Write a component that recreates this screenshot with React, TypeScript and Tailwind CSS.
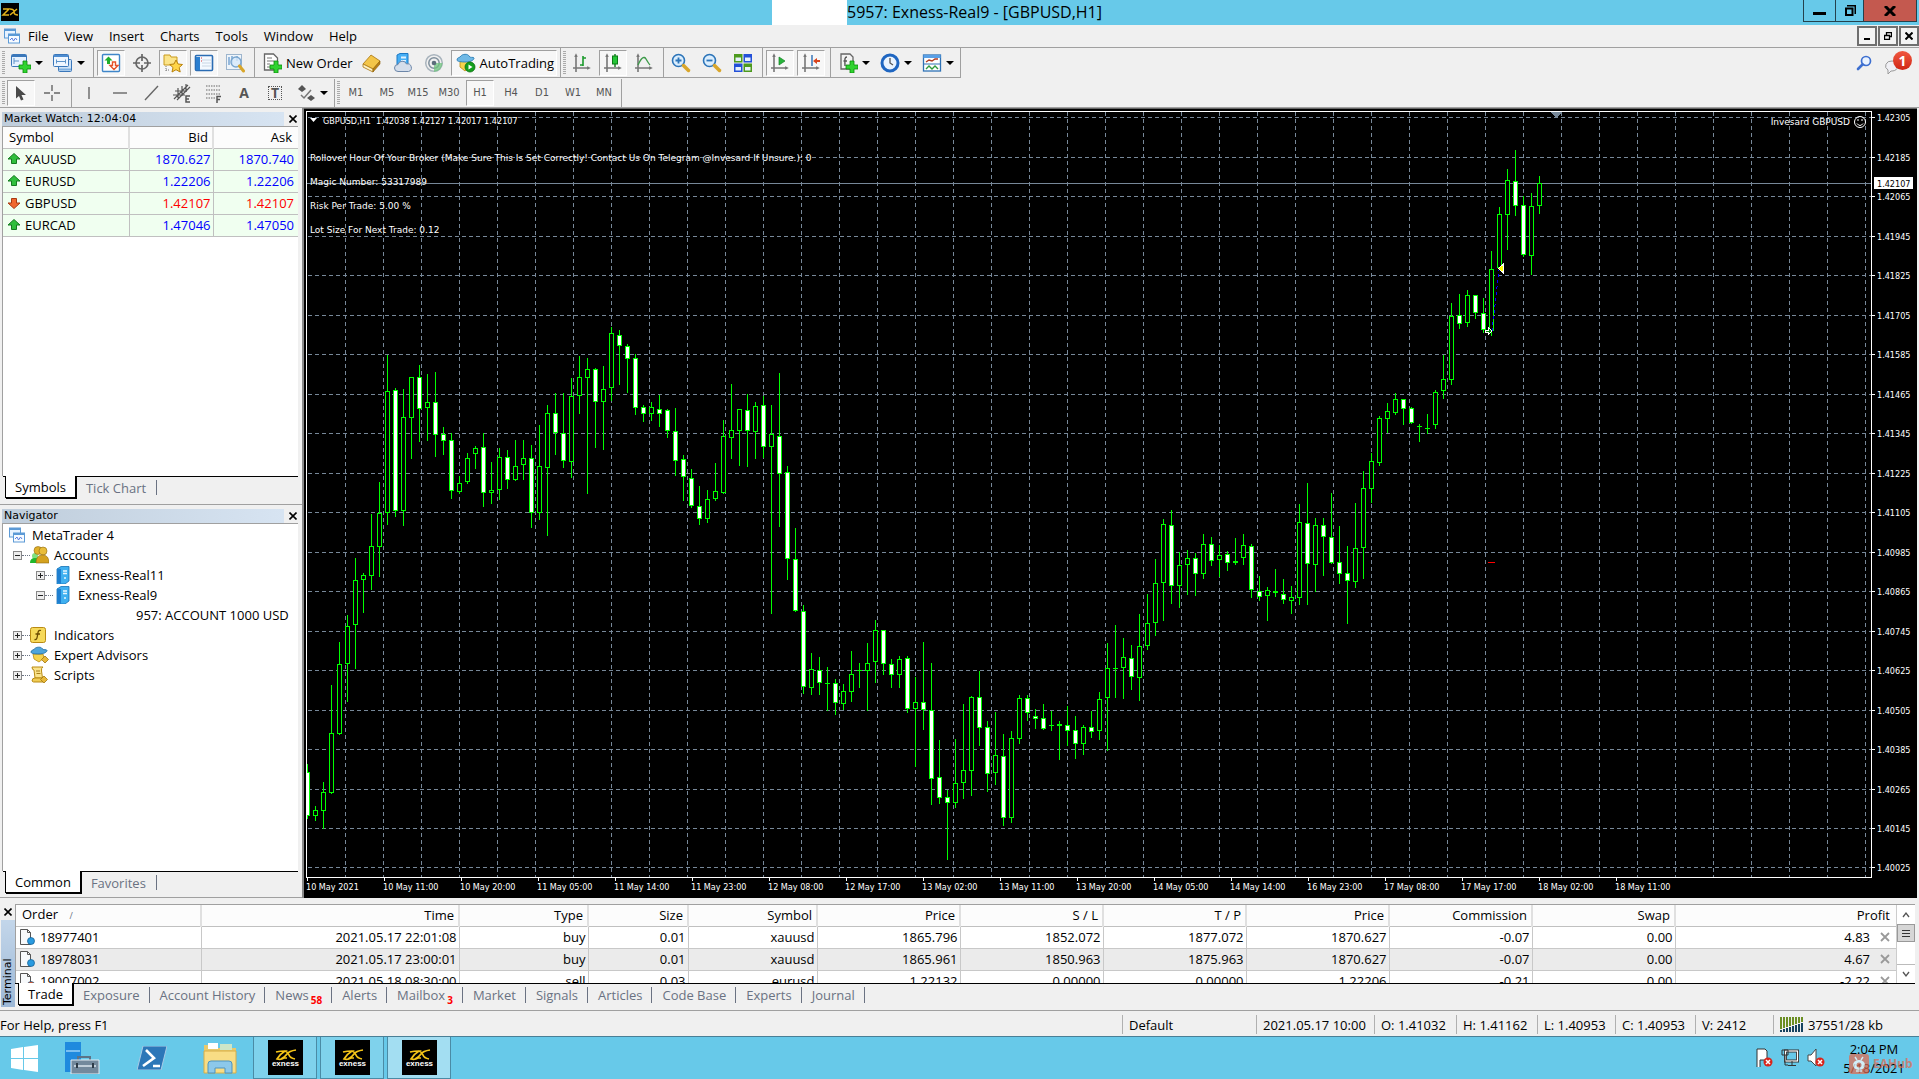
import React from "react";

const UI = "font-['Open_Sans','Noto_Sans',sans-serif]";

/* ---------- chart data ---------- */

// One candle: [high, body top, body bottom, low, bearish?], in pixels on the price scale.
type Candle = [number, number, number, number, number];

const CANDLES: Candle[] = [
  [764, 772, 816, 818, 1], [806, 810, 816, 820, 0], [782, 792, 811, 828, 0], [685, 733, 793, 793, 0],
  [642, 664, 734, 734, 0], [615, 626, 664, 701, 0], [558, 580, 625, 668, 0], [573, 575, 580, 612, 0],
  [514, 546, 576, 589, 0], [482, 513, 547, 576, 0], [355, 391, 513, 524, 0], [388, 390, 511, 516, 1],
  [389, 417, 511, 525, 0], [377, 377, 418, 458, 0], [365, 377, 409, 441, 1], [374, 402, 408, 440, 0],
  [372, 402, 435, 456, 1], [427, 434, 441, 454, 1], [433, 440, 491, 498, 1], [476, 483, 492, 493, 0],
  [453, 458, 482, 483, 0], [446, 448, 454, 468, 0], [433, 447, 493, 506, 1], [462, 490, 493, 503, 0],
  [448, 457, 490, 499, 0], [450, 457, 480, 488, 1], [440, 466, 480, 480, 0], [440, 458, 465, 479, 0],
  [445, 458, 513, 527, 1], [425, 466, 513, 519, 0], [405, 413, 468, 535, 0], [393, 413, 433, 454, 1],
  [393, 433, 461, 467, 1], [378, 396, 462, 477, 0], [356, 377, 396, 413, 0], [358, 369, 378, 493, 0],
  [368, 369, 402, 447, 1], [366, 389, 402, 449, 0], [327, 333, 388, 400, 0], [330, 335, 346, 384, 1],
  [344, 346, 359, 392, 1], [354, 358, 408, 414, 1], [405, 407, 414, 421, 1], [402, 407, 414, 420, 0],
  [395, 409, 414, 426, 1], [409, 410, 431, 437, 1], [408, 431, 461, 475, 1], [455, 459, 477, 500, 1],
  [469, 478, 506, 507, 1], [486, 506, 519, 524, 1], [490, 499, 519, 522, 0], [463, 491, 499, 500, 0],
  [420, 436, 493, 493, 0], [384, 430, 438, 458, 0], [409, 409, 431, 465, 0], [394, 410, 431, 466, 1],
  [402, 406, 432, 458, 0], [396, 405, 447, 457, 1], [405, 434, 447, 613, 0], [373, 436, 474, 526, 1],
  [466, 472, 559, 579, 1], [528, 559, 611, 611, 1], [605, 611, 687, 693, 1], [653, 669, 688, 694, 0],
  [657, 670, 683, 694, 1], [667, 683, 684, 710, 1], [679, 683, 703, 714, 1], [684, 691, 704, 709, 0],
  [651, 674, 692, 701, 0], [663, 670, 671, 687, 0], [643, 663, 671, 710, 0], [620, 630, 662, 682, 0],
  [630, 630, 664, 674, 1], [659, 664, 675, 687, 1], [656, 659, 675, 687, 0], [656, 658, 709, 712, 1],
  [677, 702, 709, 766, 0], [642, 702, 710, 729, 1], [663, 710, 779, 804, 1], [740, 777, 798, 803, 1],
  [790, 797, 803, 859, 1], [739, 783, 803, 807, 0], [704, 770, 783, 798, 0], [696, 697, 771, 795, 0],
  [671, 697, 728, 745, 1], [721, 727, 774, 791, 1], [712, 755, 773, 784, 0], [734, 756, 818, 825, 1],
  [731, 738, 818, 822, 0], [695, 698, 739, 743, 0], [695, 698, 713, 720, 1], [709, 716, 719, 728, 1],
  [704, 718, 729, 729, 1], [711, 725, 725, 730, 0], [721, 724, 726, 759, 1], [706, 725, 731, 745, 1],
  [716, 730, 744, 758, 1], [725, 727, 744, 754, 0], [711, 727, 732, 737, 1], [692, 699, 731, 739, 0],
  [643, 668, 698, 750, 0], [625, 668, 668, 697, 0], [638, 657, 668, 698, 0], [645, 658, 677, 689, 1],
  [614, 646, 678, 700, 0], [594, 623, 646, 649, 0], [559, 583, 623, 635, 0], [519, 524, 583, 620, 0],
  [510, 525, 586, 603, 1], [552, 565, 586, 607, 0], [550, 558, 565, 594, 0], [553, 558, 574, 595, 1],
  [534, 544, 574, 578, 0], [537, 544, 561, 565, 1], [545, 555, 560, 576, 0], [551, 554, 563, 570, 1],
  [538, 561, 563, 564, 0], [534, 545, 558, 564, 0], [544, 546, 590, 597, 1], [576, 591, 597, 600, 1],
  [587, 590, 596, 620, 0], [569, 591, 593, 596, 1], [579, 594, 600, 603, 1], [586, 597, 601, 613, 0],
  [504, 522, 598, 604, 0], [483, 523, 564, 604, 1], [518, 525, 565, 591, 0], [518, 525, 537, 575, 1],
  [493, 537, 563, 563, 1], [526, 562, 574, 583, 1], [546, 573, 581, 623, 1], [503, 548, 582, 587, 0],
  [471, 488, 548, 578, 0], [453, 461, 489, 502, 0], [416, 418, 463, 465, 0], [403, 411, 419, 432, 0],
  [393, 399, 413, 414, 0], [399, 399, 409, 424, 1], [407, 408, 423, 423, 1], [424, 426, 426, 441, 0],
  [414, 428, 429, 433, 0], [390, 392, 425, 428, 0], [355, 379, 391, 398, 0], [303, 316, 380, 384, 0],
  [294, 315, 324, 328, 1], [290, 295, 323, 326, 0], [295, 295, 313, 318, 1], [298, 313, 330, 332, 1],
  [251, 269, 331, 335, 0], [207, 214, 268, 268, 0], [169, 180, 215, 249, 0], [150, 181, 206, 215, 1],
  [196, 205, 255, 256, 1], [193, 206, 256, 274, 0], [176, 183, 206, 213, 0],
];

const TIMES = [
  "10 May 2021", "10 May 11:00", "10 May 20:00", "11 May 05:00", "11 May 14:00", "11 May 23:00",
  "12 May 08:00", "12 May 17:00", "13 May 02:00", "13 May 11:00", "13 May 20:00", "14 May 05:00",
  "14 May 14:00", "16 May 23:00", "17 May 08:00", "17 May 17:00", "18 May 02:00", "18 May 11:00",
];
const PRICES = Array.from({ length: 20 }, (_, i) => ((142305 - i * 120) / 100000).toFixed(5));
const COMMENTS = [
  "Rollover Hour Of Your Broker (Make Sure This Is Set Correctly! Contact Us On Telegram @Invesard If Unsure.): 0",
  "Magic Number: 53317989",
  "Risk Per Trade: 5.00 %",
  "Lot Size For Next Trade: 0.12",
];
const priceY = (i: number) => 117 + Math.ceil((i * 750) / 19);

function Chart() {
  const tiny = "fill-white text-[9px] font-['DejaVu_Sans_Condensed','DejaVu_Sans',sans-serif]";
  const note = "fill-white text-[9px] font-['DejaVu_Sans',sans-serif]";
  return (
    <svg className="absolute inset-0 h-full w-full" role="img" aria-label="GBPUSD H1 candlestick chart">
      <g transform="translate(0 -109)" shapeRendering="crispEdges">
        {PRICES.map((p, i) => (
          <line key={p} x1={4} x2={1567} y1={priceY(i) + 0.5} y2={priceY(i) + 0.5} stroke="#778899" strokeDasharray="4 3" />
        ))}
        {Array.from({ length: 41 }, (_, i) => (
          <line key={i} x1={41.5 + i * 38} x2={41.5 + i * 38} y1={112} y2={877} stroke="#778899" strokeDasharray="4 3" />
        ))}
        <rect x={3} y={183} width={1565} height={1} fill="#778899" />
        <path d="M1247 112h11l-5.500 6z" fill="#778899" />
        {CANDLES.map(([h, t, b, l, bear], i) => {
          const x = 3 + i * 8;
          return (
            <g key={i} fill="#00ff00">
              <rect x={x} y={h} width={1} height={l - h + 1} />
              <rect x={x - 2} y={t} width={5} height={Math.max(1, b - t)} />
              {b - t > 2 && <rect x={x - 1} y={t + 1} width={3} height={b - t - 2} fill={bear ? "#fff" : "#000"} />}
            </g>
          );
        })}
        <line x1={1188} y1={331} x2={1195} y2={270} stroke="#0000ff" strokeDasharray="3 3" />
        <path d="M1199.500 264v9l-5-4.500z" fill="#ffff00" stroke="#fff" />
        <path d="M1181 330h3v-3l4 4-4 4v-3h-3z" fill="#008000" stroke="#fff" />
        <rect x={1184} y={562} width={7} height={1} fill="#ff0000" />
        <rect x={0} y={109} width={2} height={789} fill="#000" />
        <path d="M2.500 111.500H1567.500V877.500H2.500Z" fill="none" stroke="#fff" />
        {PRICES.map((p, i) => (
          <rect key={p} x={1568} y={priceY(i)} width={3} height={1} fill="#fff" />
        ))}
        {TIMES.map((t, i) => (
          <rect key={t} x={3 + i * 77} y={878} width={1} height={3} fill="#fff" />
        ))}
      </g>
      <g transform="translate(0 -109)">
        {PRICES.map((p, i) => (
          <text key={p} x={1573} y={priceY(i) + 4} className={tiny}>{p}</text>
        ))}
        <rect x={1570} y={177} width={39} height={12} fill="#fff" />
        <text x={1573} y={187} className="fill-black text-[9px] font-['DejaVu_Sans_Condensed','DejaVu_Sans',sans-serif]">1.42107</text>
        {TIMES.map((t, i) => (
          <text key={t} x={2 + i * 77} y={890} className={tiny}>{t}</text>
        ))}
        <path d="M6 118h7l-3.500 4z" fill="#fff" />
        <text x={19} y={124} className={tiny}>GBPUSD,H1&nbsp; 1.42038 1.42127 1.42017 1.42107</text>
        {COMMENTS.map((c, i) => (
          <text key={c} x={6} y={161 + i * 24} className={note}>{c}</text>
        ))}
        <text x={1546} y={125} textAnchor="end" className={note}>Invesard GBPUSD</text>
        <g fill="none" stroke="#fff">
          <circle cx={1556} cy={122} r={5.500} />
          <path d="M1553 123.500q3 4 6 0M1554 119v2M1558 119v2" />
        </g>
      </g>
    </svg>
  );
}

/* ---------- icons ---------- */

const svg = (size: string, body: React.ReactNode, vb = "0 0 20 20") => (
  <svg viewBox={vb} className={`shrink-0 ${size}`} aria-hidden="true">{body}</svg>
);
const S = "h-5 w-5";
const plus = <path d="M12 8h4v4h4v4h-4v4h-4v-4H8v-4h4z" fill="#2fd32f" stroke="#0b8a0b" strokeWidth=".8" />;
const axes = <path d="M4 2v15M2 15h15M3 4l1-2 1 2M15 14l2 1-2 1M4 17v2M1 15h2" fill="none" stroke="#777" strokeWidth="1.600" />;

const I = {
  newChart: svg(S, <><rect x=".5" y="1.500" width="15" height="12" rx="1" fill="#e6f2ff" stroke="#3a77ba" /><path d="M1 3h14" stroke="#3a77ba" strokeWidth="2" /><path d="M3 5v6M3 8h5" stroke="#5d93c9" />{plus}</>),
  profiles: svg(S, <><rect x="5.500" y="6.500" width="13" height="12" rx="1" fill="#cfe3f7" stroke="#3a77ba" /><path d="M6 16.500h12" stroke="#7fb0e0" strokeWidth="2" /><rect x=".5" y="1.500" width="15" height="12" rx="1" fill="#eef6ff" stroke="#3a77ba" /><path d="M1 3h14" stroke="#4d8cd0" strokeWidth="2" /><path d="M3 8.500h10M3.500 6.500v4M12.500 6.500v4" stroke="#5d93c9" /></>),
  watch: svg(S, <><rect x="1.500" y="1.500" width="17" height="17" rx="1" fill="#fff" stroke="#3f86c9" strokeWidth="1.400" /><path d="M7.500 3.500l4 4H9v3.500H6V7.500H3.500z" fill="#1fae2d" /><path d="M13 16.500l-4-4h2.500V9h3v3.500H17z" fill="#fff" stroke="#e5532a" strokeWidth="1.400" /></>),
  cross: svg(S, <g fill="none" stroke="#666" strokeWidth="1.700"><circle cx="10" cy="10" r="6" /><path d="M10 1v7M10 12v7M1 10h7M12 10h7" /></g>),
  folder: svg(S, <><path d="M1 2h6l1 2h6v8H1z" fill="#fbe48a" stroke="#c99a1c" /><path d="M3 13v6M3 17h3" stroke="#777" strokeDasharray="1 1" /><path d="M13 7l2 4 4.500.5-3.300 3 1 4.500-4.200-2.300L9 19l1-4.500-3.300-3L11 11z" fill="#ffd548" stroke="#b9820d" /></>),
  terminal: svg(S, <><rect x="1.500" y="2.500" width="17" height="15" rx="1" fill="#f4f9ff" stroke="#2b6cb3" strokeWidth="1.600" /><path d="M2 4h4v13H2z" fill="#2b7fd0" /><path d="M8 7h9M8 10h9M8 13h9" stroke="#c9d6e4" /><path d="M7 5h1M7 8h1" stroke="#d33" /></>),
  tester: svg(S, <><rect x="1.500" y="1.500" width="15" height="15" fill="#eef4fa" stroke="#9db5cd" /><path d="M4 4v8M7 3v8M12 3v5" stroke="#3f7fbf" /><circle cx="11" cy="9" r="5" fill="#d6e9fb" fillOpacity=".8" stroke="#7aa6cf" strokeWidth="1.400" /><path d="M14.500 13l4 5" stroke="#d9a62a" strokeWidth="3" strokeLinecap="round" /></>),
  newOrder: svg(S, <><path d="M2.500 1h9l4 4v12h-13z" fill="#fff" stroke="#666" strokeWidth="1.300" /><path d="M5 5h5M5 8h7M5 11h3M5 14h3" stroke="#777" />{plus}</>),
  book: svg(S, <><path d="M1 11l8-9 9 6-7 8z" fill="#f3c548" stroke="#a8730d" strokeWidth=".8" /><path d="M1 11v3l10 5v-3z" fill="#fff3c4" stroke="#a8730d" strokeWidth=".8" /><path d="M11 16l7-8v3l-7 8z" fill="#b97f12" stroke="#8d5f08" strokeWidth=".6" /></>),
  vps: svg(S, <><path d="M4 2l3-1.500h8V12H4z" fill="#45aef5" stroke="#1d78c4" /><path d="M8 3.500h5v2H8zM8 7h5v1.500H8z" fill="#dff1ff" /><path d="M5 18.500a3.500 3.500 0 010-7 4.500 4.500 0 018.500-.5 3.800 3.800 0 012 7.500z" fill="#d5deeb" stroke="#6c86a8" /></>),
  signal: svg(S, <g fill="none"><circle cx="10" cy="10" r="8.300" stroke="#a9b4bd" strokeWidth="1.500" /><circle cx="10" cy="10" r="5.200" stroke="#7f8f9c" strokeWidth="1.500" /><path d="M10 10v9a9 9 0 008.500-9z" fill="#6fc47d" fillOpacity=".75" /><circle cx="10" cy="10" r="2.300" fill="#5c6d7b" /></g>),
  auto: svg(S, <><path d="M4 8h10l1 5-6 5-5-4z" fill="#f7d34c" stroke="#b98a12" strokeWidth=".8" /><path d="M1 7c0-3 3-2 4-4s7-2.500 8 0 4.500.5 5 2-3 4-8 4-9-.5-9-2z" fill="#6fb9e6" stroke="#2d7fb5" strokeWidth=".9" /><circle cx="14" cy="14" r="5" fill="#14a01c" stroke="#0a6d10" strokeWidth=".8" /><path d="M12.500 11.500v5l4-2.500z" fill="#fff" /></>),
  bars: svg(S, <>{axes}<path d="M11 3v10M11 5h3M8 12h3" stroke="#1b9a2c" strokeWidth="1.600" /></>),
  candles: svg(S, <>{axes}<path d="M12 1v13" stroke="#0c7a17" strokeWidth="1.400" /><rect x="9.500" y="3" width="5" height="8" fill="#25c637" stroke="#0c7a17" /></>),
  line: svg(S, <>{axes}<path d="M4 12q5-11 8-6t4 6" fill="none" stroke="#3d9a49" strokeWidth="1.400" /></>),
  zoomIn: svg(S, <><circle cx="7.500" cy="7.500" r="6" fill="#dbeefe" stroke="#2c74b8" strokeWidth="1.600" /><path d="M4.500 7.500h6M7.500 4.500v6" stroke="#2c74b8" strokeWidth="1.800" /><path d="M12.500 12.500l5 5" stroke="#d9a62a" strokeWidth="3.500" strokeLinecap="round" /></>),
  zoomOut: svg(S, <><circle cx="7.500" cy="7.500" r="6" fill="#dbeefe" stroke="#2c74b8" strokeWidth="1.600" /><path d="M4.500 7.500h6" stroke="#2c74b8" strokeWidth="1.800" /><path d="M12.500 12.500l5 5" stroke="#d9a62a" strokeWidth="3.500" strokeLinecap="round" /></>),
  tile: svg(S, <><path d="M1 1h8.500v8.500H1z" fill="#4d9a1d" /><path d="M10.500 1H19v8.500h-8.500z" fill="#2350d8" /><path d="M1 10.500h8.500V19H1z" fill="#2350d8" /><path d="M10.500 10.500H19V19h-8.500z" fill="#4d9a1d" /><path d="M2.500 4.500H8v3.500H2.500zM12 4.500h5.500v3.500H12zM2.500 14H8v3.500H2.500zM12 14h5.500v3.500H12z" fill="#e8f1fb" /></>),
  scroll: svg(S, <>{axes}<path d="M9 4v8l6-4z" fill="#27b53a" stroke="#138022" strokeWidth=".7" /></>),
  shift: svg(S, <>{axes}<path d="M11 2v11" stroke="#2b6cb3" strokeWidth="1.400" /><path d="M12 8l4-3v2h3v2h-3v2z" fill="#d8431c" /></>),
  indic: svg(S, <><path d="M3 1h9l3 3v12H3z" fill="#f3f3f3" stroke="#666" strokeWidth="1.300" /><path d="M9 4c-3 0-2 4-2 9M5.500 8H9" fill="none" stroke="#555" strokeWidth="1.400" />{plus}</>),
  clock: svg(S, <><circle cx="10" cy="10" r="8" fill="#eaf4ff" stroke="#1f66c1" strokeWidth="3" /><path d="M10 5v5l3 2" fill="none" stroke="#555" strokeWidth="1.300" /></>),
  template: svg(S, <><rect x="1.500" y="2" width="17" height="16" fill="#fff" stroke="#2f72b5" strokeWidth="1.300" /><path d="M1.500 3.500h17" stroke="#5aa0e6" strokeWidth="3" /><path d="M2 11h16" stroke="#2f72b5" /><path d="M4 9l3-2 3 1 3-2 3 0" fill="none" stroke="#b03b22" strokeWidth="1.400" /><path d="M4 16l3-3 3 3 3-3 3 3" fill="none" stroke="#2f9a3c" strokeWidth="1.400" /></>),
  cursor: svg(S, <path d="M5 3v12.500l3-2.500 2 4.500 2.500-1-2-4.500H15z" fill="#4a4a4a" />),
  plusCross: svg(S, <path d="M10 2v6M10 12v6M2 10h6M12 10h6" stroke="#666" strokeWidth="1.400" />),
  vline: svg(S, <path d="M10 4v12" stroke="#666" strokeWidth="1.400" />),
  hline: svg(S, <path d="M3 10h14" stroke="#666" strokeWidth="1.400" />),
  trend: svg(S, <path d="M4 17L17 3" stroke="#666" strokeWidth="1.400" />),
  channel: svg(S, <><path d="M2 16L16 2M5 17L18 4M3 8h12M1 12h12M6 5v10M10 3v10M14 1v8" fill="none" stroke="#555" strokeWidth="1.200" /><path d="M18 13h-4v6h4M14 16h3" fill="none" stroke="#555" strokeWidth="1.500" /></>),
  fibo: svg(S, <><path d="M3 3h15M3 7h15M3 11h15M3 15h9" stroke="#666" strokeWidth="1.200" strokeDasharray="1.500 1" /><path d="M18 13.500h-4V20M14 16.500h3" fill="none" stroke="#555" strokeWidth="1.500" /></>),
  arrows: svg(S, <><path d="M6 2l4 4-4 3-4-3zM15 12l4 3-4 3-4-3z" fill="#555" /><path d="M5 12l3 3 7-8" fill="none" stroke="#777" strokeWidth="1.500" /></>),
};

const up = svg("h-3.5 w-3.5", <path d="M7 1.500l6 5.500H9.500v4.500h-5V7H1z" fill="#2fbf3c" stroke="#157a20" />, "0 0 14 14");
const down = svg("h-3.5 w-3.5", <path d="M7 12.500L1 7h3.500V2.500h5V7H13z" fill="#f0692e" stroke="#a83a12" />, "0 0 14 14");
const mt = svg("h-4 w-4", <><rect x=".5" y="1" width="11" height="9" fill="#e8f3ff" stroke="#5c9ad6" /><path d="M.5 2h11" stroke="#5c9ad6" strokeWidth="2" /><rect x="4.500" y="6" width="11" height="9" fill="#f7fbff" stroke="#5c9ad6" /><path d="M4.500 7h11" stroke="#5c9ad6" strokeWidth="2" /><path d="M6 12l2-2 1.500 3 2-3 1.500 2" fill="none" stroke="#5b7fe0" /></>, "0 0 16 16");
const server = svg("h-[18px] w-[14px]", <><path d="M1 3l4-2.500h8V15l-4 3H1z" fill="#3fb0f0" stroke="#1572b5" strokeWidth=".8" /><path d="M1 2.500l4 .5v15l-4-1.500z" fill="#1f7fd0" /><path d="M7 5h4M7 7.500h4M8 12h2" stroke="#e8f6ff" strokeWidth="1.300" /></>, "0 0 14 18");

const accounts = svg("h-[18px] w-[19px]", <><circle cx="5" cy="10" r="3" fill="#7fe07f" /><path d="M0 17q0-5 5-5t5 5z" fill="#20b82c" /><circle cx="8" cy="4.500" r="4" fill="#e0b02a" stroke="#8d6a10" strokeWidth=".6" /><circle cx="13" cy="5" r="4" fill="#e9bd3a" stroke="#8d6a10" strokeWidth=".6" /><path d="M6 17q0-8 6.500-8T19 17z" fill="#d5a21f" stroke="#8d6a10" strokeWidth=".6" /></>, "0 0 19 18");
const fn = svg("h-4 w-4", <><rect x=".5" y=".5" width="15" height="15" rx="2" fill="#f6d95a" stroke="#b98a12" /><path d="M11 3.500c-3-1-3 2-3.500 5s-1 4.500-3 4M5.500 7h4.500" fill="none" stroke="#6b4b00" strokeWidth="1.300" /></>, "0 0 16 16");
const advisor = svg("h-[18px] w-[19px]", <><path d="M3 8h10l1 4-5 4-5-3z" fill="#f7d34c" stroke="#b98a12" strokeWidth=".8" /><path d="M1 6c0-2 3-2 4-3.500s6-2 7 0 5 .5 5 2-3 3.500-8 3.500S1 7.500 1 6z" fill="#4fa5db" stroke="#256fa3" strokeWidth=".9" /><path d="M15 10l3.500 3.500L15 17l-3.500-3.500z" fill="#e9b93a" stroke="#a1760c" strokeWidth=".8" /></>, "0 0 19 18");
const script = svg("h-[18px] w-[19px]", <><path d="M2 1h11q-2 1-1.500 4l1 7H5L4 4Q2 4 2 1z" fill="#fae38a" stroke="#b98a12" /><path d="M2 15q0-3 3-3h8v4H3.500z" fill="#f0cc55" stroke="#b98a12" /><path d="M6 5h4M6.500 7.500h4" stroke="#a57c1a" /><path d="M14 10l3.500 3.500L14 17l-3.500-3.500z" fill="#e9b93a" stroke="#a1760c" strokeWidth=".8" /></>, "0 0 19 18");
const doc = (dot: string) =>
  svg("h-4 w-4", <><path d="M1.500.5h7l3 3v12h-10z" fill="#f7f9fb" stroke="#555" /><path d="M8.500.5v3h3" fill="none" stroke="#555" /><circle cx="12" cy="12" r="3.500" fill={dot} stroke="#135c8f" strokeWidth=".7" /></>, "0 0 16 16");

/* ---------- toolbar parts ---------- */

const Handle = () => <div className="mx-0.5 h-6 w-[3px] shrink-0 bg-[repeating-linear-gradient(#aaa_0_1px,#efefef_1px_2px)]" />;
const Sep = () => <div className="mr-[3px] ml-0.5 h-full w-px shrink-0 bg-[#a0a0a0]" />;
const End = () => <div className="h-full w-px shrink-0 bg-[#a0a0a0]" />;

function Tool({ icon, name, on, menu, children }: { icon?: React.ReactNode; name: string; on?: boolean; menu?: boolean; children?: React.ReactNode }) {
  const size = children ? "gap-1 pl-1 pr-0.5" : menu ? "w-[39px] gap-1 pl-1" : "w-7 justify-center";
  const look = on ? "border-t border-l border-r border-b border-t-[#a0a0a0] border-l-[#a0a0a0] border-r-white border-b-white bg-[#f7f7f7]" : "";
  return (
    <button type="button" aria-label={name} className={`mr-[3px] flex h-[26px] shrink-0 items-center ${size} ${look}`}>
      {icon}
      {children && <span>{children}</span>}
      {menu && <span className="h-0 w-0 border-x-4 border-t-4 border-x-transparent border-t-black" />}
    </button>
  );
}

function PanelTitle({ title }: { title: string }) {
  return (
    <div className="flex h-[15px] items-center gap-1 pl-0.5">
      <h2 className="h-[14px] flex-1 bg-linear-to-r from-[#bfcddb] to-[#d7e4f2] pl-0.5 text-[11px] leading-[14px] font-['DejaVu_Sans',sans-serif]">{title}</h2>
      <button type="button" aria-label={`Close ${title}`} className="flex w-2.5 justify-center">
        {svg("h-2 w-2", <path d="M.5.5l7 7M7.500.5l-7 7" stroke="#000" strokeWidth="1.600" />, "0 0 8 8")}
      </button>
    </div>
  );
}

function PanelTabs({ first, second }: { first: string; second: string }) {
  return (
    <div className="flex h-[22px] border-t border-black text-[13px] leading-5 text-gray-500">
      <button type="button" className="-mt-px ml-0.5 border border-t-0 border-black bg-white px-[9px] text-black shadow-[1px_1px_0_#000]">{first}</button>
      <button type="button" className="px-2.5">{second}</button>
      <span className="my-[3px] w-px bg-gray-500" />
    </div>
  );
}

function Box({ open }: { open?: boolean }) {
  return svg("h-[9px] w-[9px]", <><rect x=".5" y=".5" width="8" height="8" fill="#ededed" stroke="#888" /><path d={open ? "M2 4.500h5" : "M2 4.500h5M4.500 2v5"} stroke="#222" /></>, "0 0 9 9");
}

function Node({ icon, label, open, deep }: { icon: React.ReactNode; label: string; open?: boolean; deep?: boolean }) {
  return (
    <li className={`flex h-5 items-center ${deep ? "pl-[33px]" : "pl-2.5"}`}>
      <Box open={open} />
      <span className="w-2 border-t border-dotted border-gray-500" />
      <span className={`flex shrink-0 ${deep ? "w-[25px] pl-[3px]" : "w-6"}`}>{icon}</span>
      {label}
    </li>
  );
}

/* ---------- data tables ---------- */

const WATCH = [
  ["XAUUSD", "1870.627", "1870.740", "up"],
  ["EURUSD", "1.22206", "1.22206", "up"],
  ["GBPUSD", "1.42107", "1.42107", "down"],
  ["EURCAD", "1.47046", "1.47050", "up"],
];
const ORDER_HEAD = ["Time", "Type", "Size", "Symbol", "Price", "S / L", "T / P", "Price", "Commission", "Swap"];
const ORDERS = [
  ["18977401", "2021.05.17 22:01:08", "buy", "0.01", "xauusd", "1865.796", "1852.072", "1877.072", "1870.627", "-0.07", "0.00", "4.83"],
  ["18978031", "2021.05.17 23:00:01", "buy", "0.01", "xauusd", "1865.961", "1850.963", "1875.963", "1870.627", "-0.07", "0.00", "4.67"],
  ["19007002", "2021.05.18 08:30:00", "sell", "0.03", "eurusd", "1.22132", "0.00000", "0.00000", "1.22206", "-0.21", "0.00", "-2.22"],
];
const TABS: [string, string?][] = [
  ["Exposure"], ["Account History"], ["News", "58"], ["Alerts"], ["Mailbox", "3"], ["Market"],
  ["Signals"], ["Articles"], ["Code Base"], ["Experts"], ["Journal"],
];

function MarketWatch() {
  return (
    <table className="w-full table-fixed border-collapse">
      <colgroup><col className="w-[126px]" /><col className="w-[84px]" /><col /></colgroup>
      <thead>
        <tr className="h-[21px] bg-[#fcfcfc]">
          <th className="border-r-2 border-b border-r-[#e0e0e0] border-b-[#c0c0c0] pl-1.5 text-left font-normal">Symbol</th>
          <th className="border-r-2 border-b border-r-[#e0e0e0] border-b-[#c0c0c0] pr-1 text-right font-normal">Bid</th>
          <th className="border-b border-[#c0c0c0] pr-1.5 text-right font-normal">Ask</th>
        </tr>
      </thead>
      <tbody>
        {WATCH.map(([s, b, a, d]) => (
          <tr key={s} className="h-[22px] bg-[#f0fff0]">
            <td className="border-r border-b border-[#c0c0c0] pl-1"><span className="flex items-center gap-1">{d === "up" ? up : down}{s}</span></td>
            <td className={`border-r border-b border-[#c0c0c0] pr-0.5 text-right ${d === "up" ? "text-[#0000ff]" : "text-[#ff0000]"}`}>{b}</td>
            <td className={`border-b border-[#c0c0c0] pr-1 text-right ${d === "up" ? "text-[#0000ff]" : "text-[#ff0000]"}`}>{a}</td>
          </tr>
        ))}
      </tbody>
    </table>
  );
}

function Orders() {
  const th = "border-r-2 border-b border-r-[#e0e0e0] border-b-[#c0c0c0] pr-1 text-right font-normal";
  const td = "border-r border-b border-[#c8c8c8] pr-0.5 text-right";
  return (
    <table className="w-full table-fixed border-collapse">
      <colgroup>
        <col className="w-[185px]" /><col className="w-[258px]" /><col className="w-[129px]" /><col className="w-[100px]" />
        <col className="w-[129px]" /><col className="w-[143px]" /><col className="w-[143px]" /><col className="w-[143px]" />
        <col className="w-[143px]" /><col className="w-[143px]" /><col className="w-[143px]" /><col />
      </colgroup>
      <thead>
        <tr className="h-[21px] bg-[#fcfcfc]">
          <th className="border-r-2 border-b border-r-[#e0e0e0] border-b-[#c0c0c0] pl-1.5 text-left font-normal">Order <span className="pl-2 text-[9px] text-gray-500">/</span></th>
          {ORDER_HEAD.map((h, i) => <th key={i} className={th}>{h}</th>)}
          <th className="border-b border-[#c0c0c0] pr-1.5 text-right font-normal">Profit</th>
        </tr>
      </thead>
      <tbody>
        {ORDERS.map((row, r) => (
          <tr key={row[0]} className={`h-[22px] ${r === 1 ? "bg-[#ebebeb]" : "bg-white"}`}>
            <td className="border-r border-b border-[#c8c8c8] pl-[3px]"><span className="flex items-center gap-[5px]">{doc(r === 2 ? "#e0572c" : "#2a9be0")}{row[0]}</span></td>
            {row.slice(1, 11).map((c, i) => <td key={i} className={td}>{c}</td>)}
            <td className="border-b border-[#c8c8c8] pr-1.5">
              <span className="flex items-center justify-end gap-2.5">
                {row[11]}
                <button type="button" aria-label={`Close order ${row[0]}`}>
                  {svg("h-2.5 w-2.5", <path d="M1 1l8 8M9 1L1 9" stroke="#999" strokeWidth="1.800" />, "0 0 10 10")}
                </button>
              </span>
            </td>
          </tr>
        ))}
      </tbody>
    </table>
  );
}

/* ---------- taskbar ---------- */

const Exness = () => (
  <svg viewBox="0 0 35 35" className="h-[35px] w-[35px]" aria-hidden="true">
    <rect width="35" height="35" fill="#000" />
    <path d="M8 12q4-1 9-1-5 3-8 8 4 1 7-1M13 19q4-2 6-5t9-4M17 11q3 1 4 4t6 4M15 18h4" fill="none" stroke="#f5c518" strokeWidth="1.700" />
    <text x="17.500" y="26" textAnchor="middle" className="fill-white text-[8px] font-bold font-['Liberation_Sans',sans-serif]">exness</text>
  </svg>
);

function Taskbar() {
  const slot = "flex h-full w-16 items-center justify-center border border-t-0 border-[#4a8ba5] bg-[#7fd2ec]";
  return (
    <footer className="flex h-[43px] shrink-0 border-t border-[#4a7f96] bg-[#67c9e9]">
      <button type="button" aria-label="Start" className="ml-2 flex w-8 items-center justify-center">
        {svg("h-[27px] w-[27px]", <path d="M0 4l12-2v11H0zM13 2l14-2v13H13zM0 14h12v11L0 23zM13 14h14v13l-14-2z" fill="#fff" />, "0 0 27 27")}
      </button>
      <button type="button" aria-label="Server Manager" className="ml-6 flex w-9 items-center justify-center">
        {svg("h-8 w-9", <><path d="M1 0h16v30H1z" fill="#1f8ade" /><path d="M2 9h14" stroke="#9bd2f7" strokeWidth="1.500" /><path d="M14 18v-3h12v3" fill="none" stroke="#5c7387" strokeWidth="2" /><path d="M7 18h28v14H7z" fill="#73899c" stroke="#e3edf4" /><path d="M10 24h22" stroke="#dbe6ee" strokeWidth="1.500" /><path d="M12 21h2v5h-2zM28 21h2v5h-2z" fill="#2d3b47" /></>, "0 0 36 32")}
      </button>
      <button type="button" aria-label="PowerShell" className="ml-9 flex w-8 items-center justify-center">
        {svg("h-6 w-[30px]", <><path d="M6 0h24l-6 24H0z" fill="#2c77b8" stroke="#a9cbe6" /><path d="M9 4l8 8-11 8M16 20h7" fill="none" stroke="#fff" strokeWidth="2.600" /></>, "0 0 30 24")}
      </button>
      <button type="button" aria-label="File Explorer" className="ml-[34px] flex w-[35px] items-center justify-center">
        {svg("h-8 w-[34px]", <><path d="M1 3h10l2 3h20v24H1z" fill="#e9c96b" /><path d="M5 1h10v6H5z" fill="#fff" /><path d="M17 2h12v6H17z" fill="#cde6c8" /><path d="M1 9h32v22H1z" fill="#f8dd85" stroke="#d5ae49" /><path d="M5 31V22q0-3 3-3h18q3 0 3 3v9h-7v-5h-10v5z" fill="#8cc8ea" stroke="#4d93bf" /></>, "0 0 34 32")}
      </button>
      <div className="ml-4 flex gap-[3px]">
        <button type="button" aria-label="Exness terminal 1" className={slot}><Exness /></button>
        <button type="button" aria-label="Exness terminal 2" className={slot}><Exness /></button>
        <button type="button" aria-label="Exness terminal 3" className="flex h-full w-16 items-center justify-center border border-t-0 border-[#4a8ba5] bg-[#a3def2]"><Exness /></button>
      </div>
      <div className="ml-auto flex items-center gap-2 pr-3">
        {svg("h-5 w-[18px]", <><path d="M2 19V1h8l2 2v9H5v7" fill="#fff" stroke="#333" /><circle cx="13" cy="14" r="4.500" fill="#d8251c" /><path d="M11 12l4 4M15 12l-4 4" stroke="#fff" strokeWidth="1.500" /></>, "0 0 18 20")}
        {svg("h-5 w-[18px]", <><rect x="4.500" y="3" width="12" height="10" fill="#67c9e9" stroke="#333" strokeWidth="3" /><rect x="4.500" y="3" width="12" height="10" fill="none" stroke="#fff" strokeWidth="1.200" /><path d="M7 17.500h8M11 13v4M1 2h6v5H1zM4 7v10h3" fill="none" stroke="#333" /></>, "0 0 18 20")}
        {svg("h-5 w-[18px]", <><path d="M1 7h3l5-6v17l-5-5H1z" fill="#fff" stroke="#444" /><circle cx="13" cy="14" r="4.500" fill="#d8251c" /><path d="M11 12l4 4M15 12l-4 4" stroke="#fff" strokeWidth="1.500" /></>, "0 0 18 20")}
        <div className="relative ml-2 w-[66px] pt-0.5 text-center text-[13px] leading-[19px]">
          <p>2:04 PM</p>
          <p>5/18/2021</p>
          <div className="absolute top-4 left-2 flex items-center gap-1 text-[#e8674a] opacity-70">
            {svg("h-5 w-5", <><rect width="20" height="20" rx="3" fill="#e8674a" /><path d="M6 3l2 3M14 3l-2 3" stroke="#fff" strokeWidth="1.400" /><ellipse cx="10" cy="11" rx="6" ry="5" fill="#fff" /><circle cx="10" cy="11" r="2.500" fill="#e8674a" /><path d="M7 17h6" stroke="#fff" strokeWidth="1.400" /></>)}
            <span className="text-xs font-bold">EAHub</span>
          </div>
        </div>
      </div>
    </footer>
  );
}

/* ---------- page ---------- */

export default function App() {
  const mdi = "flex h-5 w-5 items-center justify-center border-2 border-[#6f6f6f] bg-[#f4f4f4]";
  const cell = "flex items-center border-l border-[#b0b0b0] pl-1.5";
  return (
    <div className={`flex h-screen flex-col overflow-hidden bg-[#f0f0f0] text-[13px] leading-4 text-black ${UI}`}>
      <header className="flex h-[25px] shrink-0 bg-[#67c9e9]">
        <svg viewBox="0 0 18 18" className="mt-[3px] ml-px h-[18px] w-[18px]" aria-hidden="true">
          <rect width="18" height="18" fill="#000" />
          <path d="M2 6h6l-6 6h6M9 12l7-6M9 6q4 0 4 3t4 3" fill="none" stroke="#e2b31b" strokeWidth="1.500" />
        </svg>
        <div className="ml-[52px] flex flex-1 justify-center">
          <span className="w-[75px] bg-white" />
          <h1 className="text-base leading-6">5957: Exness-Real9 - [GBPUSD,H1]</h1>
        </div>
        <div className="mr-0.5 flex h-[22px] border border-t-0 border-[#24414c]">
          <button type="button" aria-label="Minimize" className="flex w-8 items-center justify-center border-r border-[#24414c]"><span className="mt-1.5 h-[3px] w-[13px] bg-black" /></button>
          <button type="button" aria-label="Restore" className="flex w-7 items-center justify-center border-r border-[#24414c]">
            {svg("h-3 w-3", <path d="M2 3.500h6.500V10H2zM3 .5h8.500V9" fill="none" stroke="#000" strokeWidth="2" />, "0 0 12 12")}
          </button>
          <button type="button" aria-label="Close" className="flex w-[52px] items-center justify-center bg-[#c4594f]">
            {svg("h-2.5 w-3", <path d="M1 0l10 10M11 0L1 10" stroke="#000" strokeWidth="3" />, "0 0 12 10")}
          </button>
        </div>
      </header>

      <nav className="flex h-[23px] shrink-0 items-center border-b border-[#a0a0a0] pl-1">
        {mt}
        {["File", "View", "Insert", "Charts", "Tools", "Window", "Help"].map((m) => (
          <button type="button" key={m} className="px-2">{m}</button>
        ))}
        <div className="ml-auto flex gap-px">
          <button type="button" aria-label="Minimize chart" className={mdi}><span className="mt-1.5 h-0.5 w-1.5 bg-black" /></button>
          <button type="button" aria-label="Restore chart" className={mdi}>{svg("h-2 w-2", <path d="M.5 3.500h5v4h-5zM2.500 3V.5h5v4H6" fill="none" stroke="#000" strokeWidth="1.300" />, "0 0 8 8")}</button>
          <button type="button" aria-label="Close chart" className={mdi}>{svg("h-2 w-2", <path d="M.5.5l7 7M7.500.5l-7 7" stroke="#000" strokeWidth="2" />, "0 0 8 8")}</button>
        </div>
      </nav>

      <div className="flex h-[30px] shrink-0 items-center">
        <div className="flex h-full items-center border-b border-[#a0a0a0]">
          <Handle />
          <Tool name="New chart" icon={I.newChart} menu />
          <Tool name="Profiles" icon={I.profiles} menu />
          <Sep />
          <Tool name="Market Watch" icon={I.watch} on />
          <Tool name="Data Window" icon={I.cross} />
          <Tool name="Navigator" icon={I.folder} on />
          <Tool name="Terminal" icon={I.terminal} on />
          <Tool name="Strategy Tester" icon={I.tester} />
          <Sep />
          <Tool name="New Order" icon={I.newOrder}>New Order</Tool>
          <Tool name="MetaEditor" icon={I.book} />
          <Tool name="Virtual Hosting" icon={I.vps} />
          <Tool name="Signals" icon={I.signal} />
          <Tool name="AutoTrading" icon={I.auto} on>AutoTrading</Tool>
          <End />
          <Handle />
          <Tool name="Bar Chart" icon={I.bars} />
          <Tool name="Candlesticks" icon={I.candles} on />
          <Tool name="Line Chart" icon={I.line} />
          <Sep />
          <Tool name="Zoom In" icon={I.zoomIn} />
          <Tool name="Zoom Out" icon={I.zoomOut} />
          <Tool name="Tile Windows" icon={I.tile} />
          <Sep />
          <Tool name="Auto Scroll" icon={I.scroll} on />
          <Tool name="Chart Shift" icon={I.shift} on />
          <Sep />
          <Tool name="Indicators" icon={I.indic} menu />
          <Tool name="Periods" icon={I.clock} menu />
          <Tool name="Templates" icon={I.template} menu />
          <End />
        </div>
        <div className="ml-auto flex items-center gap-3 pr-[7px]">
          <button type="button" aria-label="Search">
            {svg("h-4 w-4", <><circle cx="10" cy="6" r="4.500" fill="#eaf3ff" stroke="#3d6fd0" strokeWidth="1.700" /><path d="M6.500 9.500L2 14" stroke="#3d6fd0" strokeWidth="2.600" strokeLinecap="round" /></>, "0 0 16 16")}
          </button>
          <button type="button" aria-label="Notifications" className="relative h-6 w-7">
            {svg("mt-2 h-4 w-4", <path d="M8 2a6 5 0 010 10H7l-3 3v-4A6 5 0 018 2z" fill="#f0f0f5" stroke="#999" />, "0 0 16 16")}
            <span className="absolute top-0 right-0 h-[19px] w-[19px] rounded-full bg-linear-to-b from-[#f0573f] to-[#d02413] text-sm leading-[19px] font-bold text-white">1</span>
          </button>
        </div>
      </div>

      <div className="flex h-[30px] shrink-0 items-center border-b border-[#a0a0a0] pt-px text-[11px] text-[#555]">
        <Handle />
        <Tool name="Cursor" icon={I.cursor} on />
        <Tool name="Crosshair" icon={I.plusCross} />
        <Sep />
        <Tool name="Vertical Line" icon={I.vline} />
        <Tool name="Horizontal Line" icon={I.hline} />
        <Tool name="Trendline" icon={I.trend} />
        <Tool name="Channel" icon={I.channel} />
        <Tool name="Fibonacci" icon={I.fibo} />
        <Tool name="Text" icon={<b className="text-sm">A</b>} />
        <Tool name="Text Label" icon={<b className="border border-dotted border-[#555] px-0.5 text-sm leading-3">T</b>} />
        <Tool name="Arrows" icon={I.arrows} menu />
        <End />
        <Handle />
        {["M1", "M5", "M15", "M30", "H1", "H4", "D1", "W1", "MN"].map((p) => (
          <Tool key={p} name={p} on={p === "H1"} icon={<span className="font-['DejaVu_Sans_Condensed','DejaVu_Sans',sans-serif]">{p}</span>} />
        ))}
        <End />
      </div>

      <main className="flex min-h-0 flex-1">
        <aside className="flex w-[304px] shrink-0 flex-col border-r-2 border-r-[#8a8a8a]">
          <section className="flex h-[397px] flex-col border-b border-[#a0a0a0] pt-[3px] pr-1 pb-1.5">
            <PanelTitle title="Market Watch: 12:04:04" />
            <div className="ml-0.5 flex-1 border-t border-l border-[#a0a0a0] bg-white"><MarketWatch /></div>
            <div className="ml-[3px]"><PanelTabs first="Symbols" second="Tick Chart" /></div>
          </section>
          <section className="flex min-h-0 flex-1 flex-col border-b border-[#a0a0a0] pt-[3px] pr-1 pb-1">
            <PanelTitle title="Navigator" />
            <div className="ml-0.5 flex-1 border-t border-l border-[#a0a0a0] bg-white pt-px">
              <ul>
                <li className="flex h-5 items-center gap-[7px] pl-1.5">{mt}MetaTrader 4</li>
                <Node icon={accounts} label="Accounts" open />
                <Node icon={server} label="Exness-Real11" deep />
                <Node icon={server} label="Exness-Real9" open deep />
                <li className="flex h-5 items-center pl-[133px] whitespace-nowrap">957: ACCOUNT 1000 USD</li>
                <Node icon={fn} label="Indicators" />
                <Node icon={advisor} label="Expert Advisors" />
                <Node icon={script} label="Scripts" />
              </ul>
            </div>
            <div className="ml-[3px]"><PanelTabs first="Common" second="Favorites" /></div>
          </section>
        </aside>
        <div className="relative mr-0.5 flex-1 overflow-hidden border-t border-[#666] bg-black"><Chart /></div>
      </main>

      <section className="flex shrink-0 border-b border-[#a0a0a0] pt-1.5 pb-[3px]">
        <div className="flex w-[15px] flex-col items-center">
          <button type="button" aria-label="Close Terminal" className="py-1">
            {svg("h-2 w-2", <path d="M.5.5l7 7M7.500.5l-7 7" stroke="#000" strokeWidth="1.600" />, "0 0 8 8")}
          </button>
          <h2 className="w-[14px] flex-1 rotate-180 bg-linear-to-b from-[#9db8d6] to-[#c3d6ea] pt-0.5 text-[11px] leading-[14px] font-['DejaVu_Sans',sans-serif] [writing-mode:vertical-rl]">Terminal</h2>
        </div>
        <div className="min-w-0 flex-1 pr-1">
          <div className="flex h-[79px] overflow-hidden border-t border-l border-[#a0a0a0] bg-white">
            <div className="min-w-0 flex-1"><Orders /></div>
            <div className="flex w-[19px] flex-col items-center border-l border-[#ccc]">
              <button type="button" aria-label="Scroll up" className="flex h-[19px] w-full items-center justify-center">{svg("h-2 w-2", <path d="M1 6l3-4 3 4" fill="none" stroke="#555" strokeWidth="1.300" />, "0 0 8 8")}</button>
              <div className="flex h-[18px] w-full flex-col items-center justify-center gap-0.5 border border-[#999] bg-[#d6d6d6]">
                <span className="h-px w-2 bg-[#333]" /><span className="h-px w-2 bg-[#333]" /><span className="h-px w-2 bg-[#333]" />
              </div>
              <button type="button" aria-label="Scroll down" className="mt-auto flex h-[19px] w-full items-center justify-center border-t border-[#bbb]">{svg("h-2 w-2", <path d="M1 2l3 4 3-4" fill="none" stroke="#555" strokeWidth="1.300" />, "0 0 8 8")}</button>
            </div>
          </div>
          <div className="flex h-6 border-t border-black text-gray-500">
            <button type="button" className="-mt-px ml-[3px] h-[22px] border border-t-0 border-black bg-white px-[9px] text-black shadow-[1px_1px_0_#000]">Trade</button>
            {TABS.map(([t, n]) => (
              <button type="button" key={t} className="my-[3px] flex h-4 items-center border-r border-gray-500 pr-[9px] pl-2.5">
                {t}
                {n && <span className="mt-2.5 ml-0.5 text-[10px] font-bold text-[#ff0000]">{n}</span>}
              </button>
            ))}
          </div>
        </div>
      </section>

      <div className="flex h-[25px] shrink-0 pt-1 pb-0.5">
        <span className="flex flex-1 items-center">For Help, press F1</span>
        <span className={`${cell} w-[134px]`}>Default</span>
        <span className={`${cell} w-[118px]`}>2021.05.17 10:00</span>
        <span className={`${cell} w-[82px]`}>O: 1.41032</span>
        <span className={`${cell} w-[81px]`}>H: 1.41162</span>
        <span className={`${cell} w-[78px]`}>L: 1.40953</span>
        <span className={`${cell} w-[80px]`}>C: 1.40953</span>
        <span className={`${cell} w-[78px]`}>V: 2412</span>
        <span className={`${cell} w-[146px] gap-1`}>
          <svg viewBox="0 0 24 15" className="h-[15px] w-6" shapeRendering="crispEdges" aria-hidden="true">
            {[0, 3, 6, 9, 12, 15, 18, 21].map((x, i) => (
              <g key={x}>
                <rect x={x} y={0} width={2} height={12 - i} fill="#6b8e23" />
                <rect x={x} y={13 - i} width={2} height={2 + i} fill="#16425f" />
              </g>
            ))}
          </svg>
          37551/28 kb
        </span>
      </div>

      <Taskbar />
    </div>
  );
}
